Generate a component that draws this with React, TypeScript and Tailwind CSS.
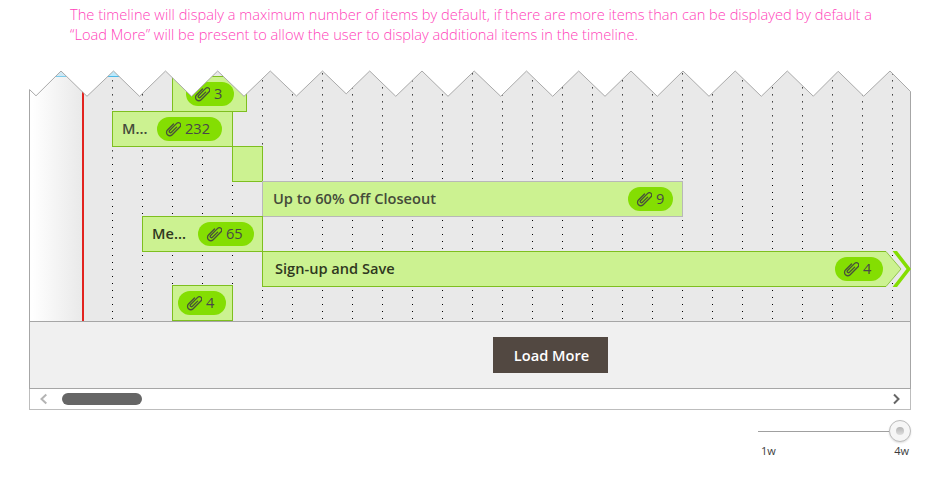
import React from "react";

const FONT = "font-['Open_Sans','Noto_Sans',sans-serif]";

// Torn top edge of the timeline, running left to right.
const EDGE =
  "29.5,89.5 36,95.8 61,71 87,96.3 113.5,71 139.5,96.3 165.5,71 191.5,96.3 217.7,71 244,96.3 270.3,71 296.5,96 322.5,71 346.2,93.8 369.7,71 395.8,96.3 422,71 448,96.3 474.2,71 500.7,96.3 526.5,71 552.7,96.3 578.7,71 605,96.3 631,71 657.3,96.3 683,71 709,96.3 735.2,71 761.3,96.3 787.3,71 813.3,96.2 838.2,71.3 863.7,96.2 890,71 910.5,91.5";

const COLUMNS = Array.from({ length: 27 }, (_, i) => 83.5 + i * 30);

function Clip() {
  return (
    <svg width="16" height="16" viewBox="-8.5 -8 16 16" className="shrink-0" fill="none" stroke="#48503a" strokeWidth="1.3" strokeLinecap="round">
      <path
        transform="rotate(45)"
        d="M-3.5 -3.5V5a3.3 3.3 0 0 0 6.6 0V-6.2a2.4 2.4 0 0 0-4.8 0V3.8a1.3 1.3 0 0 0 2.6 0V-3.6"
      />
    </svg>
  );
}

function Badge({ count, className }: { count: number; className: string }) {
  return (
    <span className={`flex h-6 shrink-0 items-center gap-1 rounded-full bg-[#84de02] pl-2 text-[14.62px] font-normal text-[#484848] ${className}`}>
      <Clip />
      <span className="pb-[2px] leading-5">{count}</span>
    </span>
  );
}

function Bar({ className, label, children }: { className: string; label?: string; children?: React.ReactNode }) {
  return (
    <div className={`flex h-9 shrink-0 items-center border border-[#7ebf1f] bg-[#ccf291] text-[14.62px] font-semibold text-[#444b3a] ${className}`}>
      {label && <span className="pb-[2px] leading-5">{label}</span>}
      {children}
    </div>
  );
}

// Dotted day columns behind the bars; the dots are taller in the upper rows.
function GridLines() {
  return (
    <svg className="absolute left-0 top-0" width="881" height="251" shapeRendering="crispEdges">
      {COLUMNS.map((x) => (
        <g key={x}>
          <line x1={x} x2={x} y1="3" y2="93" stroke="#888" strokeDasharray="2 5" />
          <line x1={x} x2={x} y1="3" y2="93" stroke="#444" strokeDasharray="1 6" />
          <line x1={x} x2={x} y1="94" y2="251" stroke="#000" strokeDasharray="1 6" />
        </g>
      ))}
    </svg>
  );
}

export default function App() {
  return (
    <div className={`relative flex h-[484px] w-[939px] flex-col overflow-hidden bg-white ${FONT}`}>
      <p className="z-20 h-[70px] whitespace-nowrap pl-[70px] pt-1 text-[14.63px] font-light leading-5 text-[#ff3fba]">
        The timeline will dispaly a maximum number of items by default, if there are more items than can be displayed by default a<br />
        “Load More” will be present to allow the user to display additional items in the timeline.
      </p>

      <section className="relative ml-[29px] h-[252px] w-[882px] border-b border-r border-[#a6a6a6] bg-[#e9e9e9]">
        <GridLines />
        <div className="relative flex h-[251px]">
          <div className="w-[53px] border-l border-[#a6a6a6] bg-linear-to-r from-white from-5% to-[#e9e9e9]">
            <div className="h-[7px] border-b border-[#7cccec] bg-[#cfe8f4]" />
          </div>
          <div className="w-[2px] bg-[#e2231f]" />
          <div className="flex w-[826px] flex-col">
            <div className="h-[7px] w-[60px] shrink-0 border-b border-[#4ab9e8] bg-[#bde9fb]" />
            <Bar className="-mt-px ml-[88px] w-[75px] pl-[13px]"><Badge count={3} className="w-12" /></Bar>
            <Bar label="M..." className="-mt-px ml-[28px] w-[121px] justify-between pl-[9px] pr-[10px]"><Badge count={232} className="w-[65px]" /></Bar>
            <Bar className="-mt-px ml-[148px] w-[31px]" />
            <Bar label="Up to 60% Off Closeout" className="-mt-px ml-[178px] w-[421px] justify-between border-[#b8b8b8]! pl-[10px] pr-[9px]"><Badge count={9} className="w-[45px]" /></Bar>
            <Bar label="Me..." className="-mt-px ml-[58px] w-[121px] justify-between pl-[9px] pr-[8px] text-[#2f3820]!"><Badge count={65} className="w-14" /></Bar>
            <div className="-mt-px ml-[178px] flex h-9 w-[648px] shrink-0">
              <Bar label="Sign-up and Save" className="w-[624px] justify-between border-r-0! pl-3 pr-[3px] text-[#2f3820]!"><Badge count={4} className="w-12" /></Bar>
              <svg className="-mr-px shrink-0" width="25" height="36">
                <path d="M0 .5L15 18 0 35.5" fill="#ccf291" stroke="#91c64b" />
                <path d="M6.5 0h4.5l14 18-14 18H6.5l14-18z" fill="#84de02" />
              </svg>
            </div>
            <Bar className="-mt-[2px] ml-[88px] w-[61px] pl-[5px]"><Badge count={4} className="w-12" /></Bar>
          </div>
        </div>
      </section>

      <footer className="ml-[29px] flex h-[67px] w-[882px] border-x border-b border-[#a6a6a6] bg-[#f0f0f0] pl-[463px] pt-[15px]">
        <button className="h-9 w-[115px] bg-[#524841] pb-px pl-[2px] text-[14.62px] font-semibold leading-5 text-white">Load More</button>
      </footer>

      <div className="ml-[29px] flex h-[21px] w-[882px] items-center border-x border-b border-[#bdbdbd] pl-[10px] pr-[9px]">
        <svg width="8" height="12" fill="none" stroke="#b4b4b4" strokeWidth="2"><path d="M6.3 1.5L1.5 6l4.8 4.5" /></svg>
        <div className="ml-[14px] h-3 w-20 rounded-full bg-[#666]" />
        <svg className="ml-auto" width="9" height="12" fill="none" stroke="#666" strokeWidth="2"><path d="M2 1.5L6.5 6 2 10.5" /></svg>
      </div>

      <div className="ml-[758px] mt-[10px] flex h-[22px] w-[153px] items-center">
        <div className="h-px w-[131px] bg-[#a0a0a0]" />
        <div className="flex size-[22px] items-center justify-center rounded-full border border-[#bcbcbc] bg-[#f6f6f6] shadow-[0_1px_2px_#0002]">
          <div className="size-2 rounded-full bg-linear-to-b from-[#b5b5b5] to-[#dedede]" />
        </div>
      </div>
      <div className="ml-[761px] mt-[1px] flex w-[148px] justify-between text-[11px] leading-[15px] text-[#3c3c3c]">
        <span>1w</span><span>4w</span>
      </div>

      <svg className="absolute left-0 top-0 z-10" width="939" height="100">
        <polygon points={`0,60 0,100 29,100 29,89.5 ${EDGE} 911,91.5 911,100 939,100 939,60`} fill="#fff" />
        <polyline points={EDGE} fill="none" stroke="#aaa" strokeWidth="1" />
      </svg>
    </div>
  );
}
